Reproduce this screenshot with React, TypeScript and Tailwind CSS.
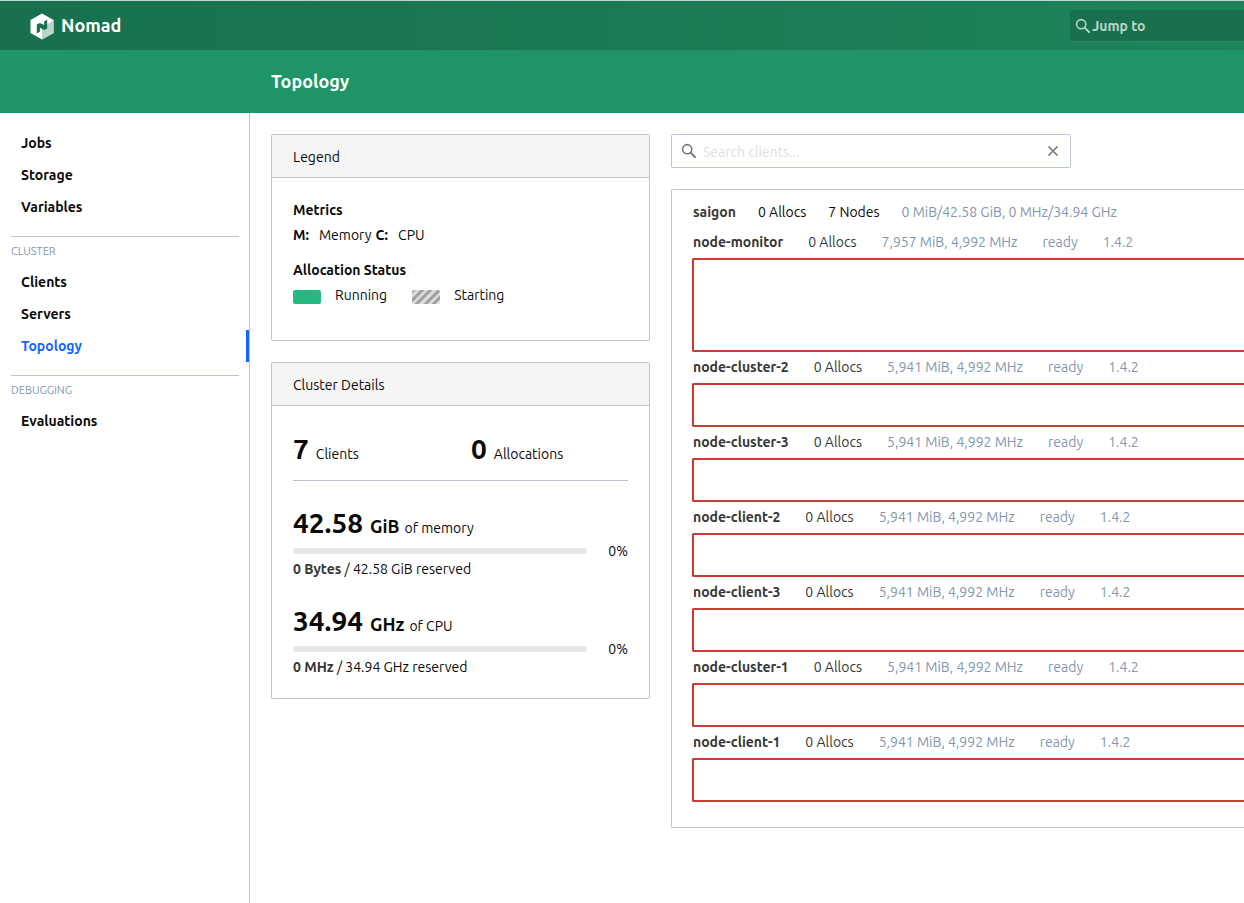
import { useState } from 'react';

type NavItem = { label: string; active?: boolean };

type ClientNode = { name: string; resources: string; tall?: boolean };

const mainNav: NavItem[] = [{ label: 'Jobs' }, { label: 'Storage' }, { label: 'Variables' }];

const clusterNav: NavItem[] = [
  { label: 'Clients' },
  { label: 'Servers' },
  { label: 'Topology', active: true },
];

const debugNav: NavItem[] = [{ label: 'Evaluations' }];

const nodes: ClientNode[] = [
  { name: 'node-monitor', resources: '7,957 MiB, 4,992 MHz', tall: true },
  { name: 'node-cluster-2', resources: '5,941 MiB, 4,992 MHz' },
  { name: 'node-cluster-3', resources: '5,941 MiB, 4,992 MHz' },
  { name: 'node-client-2', resources: '5,941 MiB, 4,992 MHz' },
  { name: 'node-client-3', resources: '5,941 MiB, 4,992 MHz' },
  { name: 'node-cluster-1', resources: '5,941 MiB, 4,992 MHz' },
  { name: 'node-client-1', resources: '5,941 MiB, 4,992 MHz' },
];

function NomadMark() {
  return (
    <svg viewBox="0 0 24 27" className="mt-px h-[27px] w-6" aria-hidden="true">
      <path d="M12 0.5 23.5 7v13L12 26.5 0.5 20V7z" fill="#fff" />
      <path d="M12 14.5 23.5 7.5V20L12 26.5z" fill="#bad5c8" />
      <path d="M6.8 11.6 9.8 9.9l4.4 2.2V8.6L17.2 6.8v8.6l-2.8 1.7-4.5-2.4v4L6.8 20.4z" fill="#18704c" />
    </svg>
  );
}

function SearchIcon({ className }: { className: string }) {
  return (
    <svg viewBox="0 0 16 16" className={className} fill="none" stroke="currentColor" aria-hidden="true">
      <circle cx="6.2" cy="6.2" r="4.6" strokeWidth="1.6" />
      <path d="M9.6 9.6 14.6 14.6" strokeWidth="2" />
    </svg>
  );
}

function CloseIcon() {
  return (
    <svg viewBox="0 0 12 12" className="size-3" fill="none" stroke="currentColor" strokeWidth="1.6" aria-hidden="true">
      <path d="M1.5 1.5 10.5 10.5M10.5 1.5 1.5 10.5" />
    </svg>
  );
}

function NavList({ items }: { items: NavItem[] }) {
  return (
    <ul>
      {items.map((item) => (
        <li key={item.label}>
          <a
            href="#"
            aria-current={item.active ? 'page' : undefined}
            className={
              item.active
                ? 'flex h-8 items-center border-r-[3px] border-[#1563ff] pl-[21px] font-bold text-[#1563ff]'
                : 'flex h-8 items-center pl-[21px] font-bold text-[#0a0a0a]'
            }
          >
            {item.label}
          </a>
        </li>
      ))}
    </ul>
  );
}

function NavHeading({ children }: { children: string }) {
  return (
    <h2 className="mr-[10px] ml-[11px] mt-[13px] flex h-[30px] items-center border-t border-[#bbc4d1] text-[11px] text-[#8296b0] uppercase">
      {children}
    </h2>
  );
}

function Card({ title, children }: { title: string; children: React.ReactNode }) {
  return (
    <section className="rounded-xs border border-[#bbc4d1]">
      <h2 className="flex h-[43px] items-center border-b border-[#bbc4d1] bg-[#f5f5f5] px-[21px] pt-0.5">{title}</h2>
      <div className="px-[21px] py-[22px]">{children}</div>
    </section>
  );
}

function Resource(props: { amount: string; unit: string; of: string; used: string; total: string }) {
  return (
    <div>
      <p className="flex h-[30px] items-baseline leading-[30px]">
        <span className="text-[28px] font-bold">{props.amount}</span>
        <span className="ml-[7px] text-[18px] font-bold">{props.unit}</span>
        <span className="ml-[5px]">{props.of}</span>
      </p>
      <div className="mt-1 flex h-[18px] items-center gap-[21px]">
        <div
          role="progressbar"
          aria-label={props.of}
          aria-valuenow={0}
          className="h-1.5 flex-1 rounded-full bg-[#e6e6e6]"
        />
        <span>0%</span>
      </div>
      <p className="leading-[18px]">
        <strong className="font-bold text-[#363636]">{props.used}</strong> / {props.total} reserved
      </p>
    </div>
  );
}

export default function App() {
  const [query, setQuery] = useState('');

  return (
    <div className="flex min-h-screen flex-col overflow-x-hidden bg-white font-['Ubuntu','Noto_Sans',sans-serif] text-[14px] leading-[21px] text-[#0a0a0a]">
      <header>
        <div className="flex h-[50px] items-center justify-between border-t border-[#bcd5d6] bg-linear-to-r from-[#18704c] to-[#1d845a]">
          <a href="#" className="flex items-center gap-[7px] pl-[30px] text-white">
            <NomadMark />
            <span className="text-[18px] font-bold">Nomad</span>
          </a>
          <button
            type="button"
            className="flex h-8 w-[174px] items-center gap-px rounded-l-xs border-b border-[#2f8a66] bg-[#18704c] pt-0.5 pl-[5px] font-bold text-[#b9d4c9]"
          >
            <SearchIcon className="size-4" />
            Jump to
          </button>
        </div>
        <div className="flex h-[63px] items-center bg-[#1e9467] pl-[271px]">
          <h1 className="text-[18px] font-bold text-white">Topology</h1>
        </div>
      </header>

      <div className="flex flex-1">
        <nav aria-label="Main" className="w-[250px] shrink-0 border-r border-[#bbc4d1] pt-[14px]">
          <NavList items={mainNav} />
          <NavHeading>Cluster</NavHeading>
          <NavList items={clusterNav} />
          <NavHeading>Debugging</NavHeading>
          <NavList items={debugNav} />
        </nav>

        <main className="flex min-w-0 flex-1 gap-[21px] pt-[21px] pl-[21px]">
          <div className="flex w-[379px] shrink-0 flex-col gap-[21px]">
            <Card title="Legend">
              <h3 className="font-bold">Metrics</h3>
              <dl className="mt-1 flex">
                <dt className="font-bold">M:</dt>
                <dd className="mr-1 ml-[10px]">Memory</dd>
                <dt className="font-bold">C:</dt>
                <dd className="ml-[10px]">CPU</dd>
              </dl>
              <h3 className="mt-[14px] font-bold">Allocation Status</h3>
              <ul className="mt-1 mb-3 flex gap-[25px]">
                <li className="flex items-center gap-[14px]">
                  <span className="mt-0.5 h-[14px] w-7 rounded-xs bg-[#25ba81]" />
                  Running
                </li>
                <li className="flex items-center gap-[14px]">
                  <span className="mt-0.5 h-[14px] w-7 rounded-xs bg-[repeating-linear-gradient(-45deg,#d9d9d9_0px,#d9d9d9_3px,#a0a0a0_3px,#a0a0a0_6px)]" />
                  Starting
                </li>
              </ul>
            </Card>

            <Card title="Cluster Details">
              <div className="flex h-[53px] border-b border-[#bbc4d1]">
                <p className="flex flex-1 items-baseline gap-[7px] leading-[42px]">
                  <span className="text-[28px] font-bold">7</span>
                  Clients
                </p>
                <p className="flex flex-1 items-baseline gap-[7px] pl-[21px] leading-[42px]">
                  <span className="text-[28px] font-bold">0</span>
                  Allocations
                </p>
              </div>
              <div className="flex flex-col gap-7 pt-[27px]">
                <Resource amount="42.58" unit="GiB" of="of memory" used="0 Bytes" total="42.58 GiB" />
                <Resource amount="34.94" unit="GHz" of="of CPU" used="0 MHz" total="34.94 GHz" />
              </div>
            </Card>
          </div>

          <div className="flex min-w-0 flex-1 flex-col gap-[21px]">
            <div className="flex h-[34px] w-[400px] items-center rounded-xs border border-[#bbc4d1] pr-[11px] pl-[9px] text-[#767676]">
              <SearchIcon className="size-4 shrink-0" />
              <input
                type="text"
                aria-label="Search clients"
                placeholder="Search clients..."
                value={query}
                onChange={(event) => setQuery(event.target.value)}
                className="min-w-0 flex-1 px-[6px] pt-0.5 text-[#0a0a0a] outline-none placeholder:text-[#dbdfe6]"
              />
              <button type="button" aria-label="Clear search" onClick={() => setQuery('')}>
                <CloseIcon />
              </button>
            </div>

            <section className="rounded-l-xs border border-r-0 border-[#bbc4d1] pt-[7px] pb-[25px] pl-5">
              <header className="flex h-[30px] items-center gap-[22px] pl-px whitespace-nowrap">
                <strong className="font-bold text-[#363636]">saigon</strong>
                <span>0 Allocs</span>
                <span>7 Nodes</span>
                <span className="text-[#8296b0]">0 MiB/42.58 GiB, 0 MHz/34.94 GHz</span>
              </header>
              {nodes.map((node) => (
                <article key={node.name}>
                  <header className="flex h-[31px] items-center gap-[25px] pl-px whitespace-nowrap text-[#8296b0]">
                    <strong className="font-bold text-[#363636]">{node.name}</strong>
                    <span className="text-[#363636]">0 Allocs</span>
                    <span>{node.resources}</span>
                    <span>ready</span>
                    <span>1.4.2</span>
                  </header>
                  <div
                    className={
                      node.tall
                        ? 'h-[94px] rounded-l-xs border-2 border-r-0 border-[#c73b33]'
                        : 'h-11 rounded-l-xs border-2 border-r-0 border-[#c73b33]'
                    }
                  />
                </article>
              ))}
            </section>
          </div>
        </main>
      </div>
    </div>
  );
}
